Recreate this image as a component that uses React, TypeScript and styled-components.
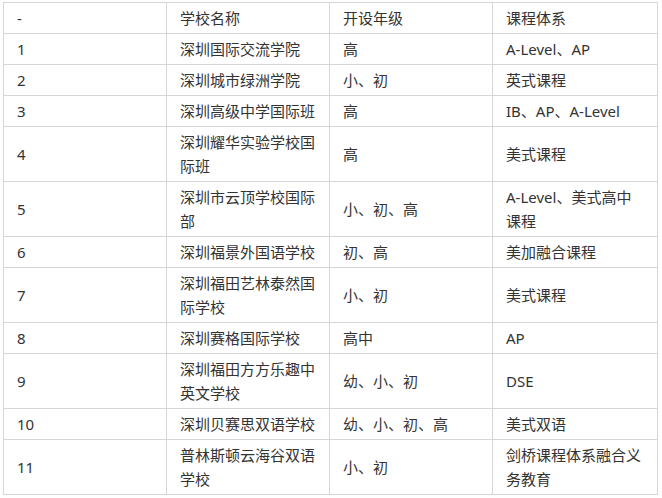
import React from "react";
import styled, { createGlobalStyle } from "styled-components";

const Global = createGlobalStyle`
  html, body { margin: 0; padding: 0; background: #fff; }
  body { font-family: "Noto Sans", "Noto Sans CJK SC", sans-serif; color: #333; }
`;

const Page = styled.div`
  padding: 2px 3px;
`;

const Table = styled.table`
  border-collapse: collapse;
  table-layout: fixed;
  width: 654px;
  font-size: 15px;
  line-height: 24px;
  color: #333;
`;

const Col = styled.col<{ $w: number }>`
  width: ${(p) => p.$w}px;
`;

const Cell = styled.td`
  border: 1px solid #d6d6d6;
  padding: 3px 12px 3px 13px;
  vertical-align: middle;
  text-align: left;
  word-break: break-all;
`;

const rows: [string, string, string, string][] = [
  ["-", "学校名称", "开设年级", "课程体系"],
  ["1", "深圳国际交流学院", "高", "A-Level、AP"],
  ["2", "深圳城市绿洲学院", "小、初", "英式课程"],
  ["3", "深圳高级中学国际班", "高", "IB、AP、A-Level"],
  ["4", "深圳耀华实验学校国际班", "高", "美式课程"],
  ["5", "深圳市云顶学校国际部", "小、初、高", "A-Level、美式高中课程"],
  ["6", "深圳福景外国语学校", "初、高", "美加融合课程"],
  ["7", "深圳福田艺林泰然国际学校", "小、初", "美式课程"],
  ["8", "深圳赛格国际学校", "高中", "AP"],
  ["9", "深圳福田方方乐趣中英文学校", "幼、小、初", "DSE"],
  ["10", "深圳贝赛思双语学校", "幼、小、初、高", "美式双语"],
  ["11", "普林斯顿云海谷双语学校", "小、初", "剑桥课程体系融合义务教育"],
];

const widths = [163, 163, 163, 165];

export default function App() {
  return (
    <>
      <Global />
      <Page>
        <Table>
          <colgroup>
            {widths.map((w, i) => (
              <Col key={i} $w={w} />
            ))}
          </colgroup>
          <tbody>
            {rows.map((r, i) => (
              <tr key={i}>
                {r.map((c, j) => (
                  <Cell key={j}>{c}</Cell>
                ))}
              </tr>
            ))}
          </tbody>
        </Table>
      </Page>
    </>
  );
}
